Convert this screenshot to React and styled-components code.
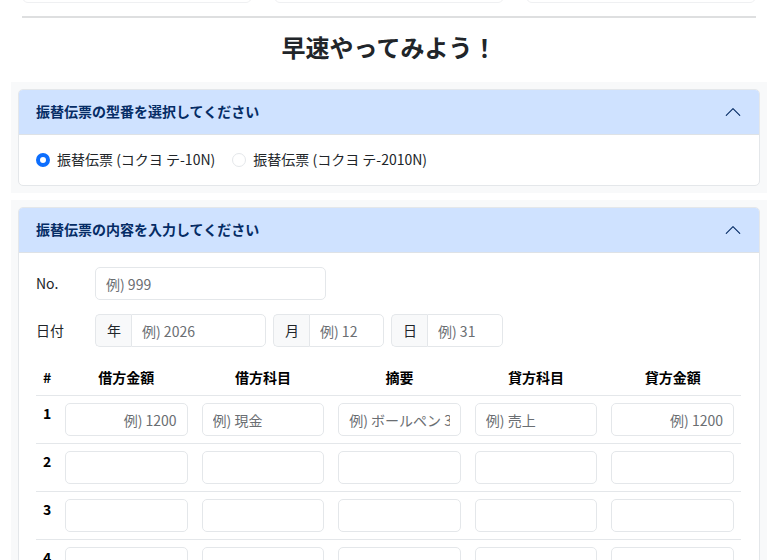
import React, { useState } from "react";
import styled, { createGlobalStyle } from "styled-components";

const models = [
  { id: "te10n", label: "振替伝票 (コクヨ テ-10N)" },
  { id: "te2010n", label: "振替伝票 (コクヨ テ-2010N)" },
];

const dateParts = [
  { id: "year", label: "年", placeholder: "例) 2026" },
  { id: "month", label: "月", placeholder: "例) 12" },
  { id: "day", label: "日", placeholder: "例) 31" },
];

const columns = [
  { id: "debitAmount", label: "借方金額", placeholder: "例) 1200", align: "right" },
  { id: "debitAccount", label: "借方科目", placeholder: "例) 現金" },
  { id: "summary", label: "摘要", placeholder: "例) ボールペン 3本" },
  { id: "creditAccount", label: "貸方科目", placeholder: "例) 売上" },
  { id: "creditAmount", label: "貸方金額", placeholder: "例) 1200", align: "right" },
];

const rows = [1, 2, 3, 4];

const Panel = ({ title, children }) => {
  const [open, setOpen] = useState(true);

  return (
    <Section>
      <Accordion>
        <Heading>
          <Toggle
            type="button"
            aria-expanded={open}
            onClick={() => setOpen(!open)}
          >
            {title}
            <Chevron $open={open} viewBox="0 0 16 16" aria-hidden="true">
              <path d="m2 11 6-6 6 6" />
            </Chevron>
          </Toggle>
        </Heading>
        {open && <Body>{children}</Body>}
      </Accordion>
    </Section>
  );
};

const App = () => {
  const [model, setModel] = useState("te10n");

  return (
    <Page>
      <GlobalStyle />
      <Cards>
        <Card />
        <Card />
        <Card />
      </Cards>
      <Divider />
      <Title>早速やってみよう！</Title>

      <Panel title="振替伝票の型番を選択してください">
        <RadioGroup>
          {models.map(({ id, label }) => (
            <RadioLabel key={id} htmlFor={id}>
              <Radio
                type="radio"
                name="model"
                id={id}
                checked={model === id}
                onChange={() => setModel(id)}
              />
              {label}
            </RadioLabel>
          ))}
        </RadioGroup>
      </Panel>

      <Panel title="振替伝票の内容を入力してください">
        <Fields>
          <Field>
            <label htmlFor="number">No.</label>
            <NumberBox>
              <Input type="text" id="number" placeholder="例) 999" />
            </NumberBox>
          </Field>
          <Field>
            <label htmlFor="year">日付</label>
            <DateBox>
              {dateParts.map(({ id, label, placeholder }) => (
                <InputGroup key={id}>
                  <Addon htmlFor={id}>{label}</Addon>
                  <Input type="text" id={id} placeholder={placeholder} />
                </InputGroup>
              ))}
            </DateBox>
          </Field>
        </Fields>
        <Table>
          <thead>
            <tr>
              <NumberHead scope="col">#</NumberHead>
              {columns.map(({ id, label }) => (
                <th key={id} scope="col">
                  {label}
                </th>
              ))}
            </tr>
          </thead>
          <tbody>
            {rows.map((row) => (
              <tr key={row}>
                <th scope="row">{row}</th>
                {columns.map(({ id, label, placeholder, align }) => (
                  <td key={id}>
                    <Input
                      type="text"
                      aria-label={`${label} ${row}`}
                      placeholder={row === 1 ? placeholder : undefined}
                      $align={align}
                    />
                  </td>
                ))}
              </tr>
            ))}
          </tbody>
        </Table>
      </Panel>
    </Page>
  );
};

export default App;

const GlobalStyle = createGlobalStyle`
  *, *::before, *::after {
    box-sizing: border-box;
  }

  body {
    margin: 0;
    background: #fff;
    color: #212529;
    font-family: "Noto Sans CJK JP", sans-serif;
    font-size: 14px;
    line-height: 21px;
  }

  input, button {
    font: inherit;
  }
`;

const Page = styled.main`
  padding: 0 15px 0 11px;
`;

const Cards = styled.div`
  display: grid;
  grid-template-columns: repeat(3, 1fr);
  align-content: end;
  gap: 22px;
  height: 3px;
  padding: 0 11px;
  overflow: hidden;
`;

const Card = styled.div`
  height: 14px;
  border: 1px solid #eff0f2;
  border-radius: 6px;
`;

const Divider = styled.hr`
  height: 2px;
  margin: 13px 11px 14px;
  border: none;
  background: #dedfe0;
`;

const Title = styled.h2`
  margin: 0 0 20px;
  font-size: 24px;
  font-weight: 700;
  line-height: 30px;
  text-align: center;
`;

const Section = styled.section`
  margin-bottom: 7px;
  padding: 7px;
  background: #f8f9fa;
`;

const Accordion = styled.div`
  overflow: hidden;
  border: 1px solid #e4e7ea;
  border-radius: 5px;
  background: #fff;
`;

const Heading = styled.h2`
  margin: 0;
  font-size: 14px;
`;

const Toggle = styled.button`
  display: flex;
  align-items: center;
  justify-content: space-between;
  width: 100%;
  padding: 11px 17px 12px;
  border: none;
  border-bottom: 1px solid #dee2e6;
  background: #cfe2ff;
  color: #052c65;
  font-weight: 700;
  cursor: pointer;
`;

const Chevron = styled.svg`
  width: 18px;
  height: 18px;
  fill: none;
  stroke: #052c65;
  stroke-linecap: round;
  stroke-linejoin: round;
  transform: ${({ $open }) => ($open ? "none" : "rotate(180deg)")};
`;

const Body = styled.div`
  padding: 14px 18px 15px 17px;
`;

const RadioGroup = styled.div`
  display: flex;
  gap: 17px;
`;

const RadioLabel = styled.label`
  display: flex;
  align-items: center;
  gap: 7px;
`;

const Radio = styled.input`
  appearance: none;
  width: 14px;
  height: 14px;
  margin: 0;
  border: 1px solid #e4e7ea;
  border-radius: 50%;
  background: #fff;

  &:checked {
    border: 4px solid #0d6efd;
  }
`;

const Fields = styled.div`
  display: grid;
  gap: 14px;
  margin-bottom: 13px;
`;

const Field = styled.div`
  display: grid;
  grid-template-columns: 59px 1fr;
  align-items: center;
`;

const NumberBox = styled.div`
  display: grid;
  grid-template-columns: 231fr 415fr;
`;

const DateBox = styled.div`
  display: grid;
  grid-template-columns: 171fr 111fr 112fr 231fr;
  gap: 7px;
`;

const InputGroup = styled.div`
  display: flex;
`;

const Input = styled.input`
  display: block;
  width: 100%;
  min-width: 0;
  height: 33px;
  padding: 5px 10px;
  border: 1px solid #e4e7ea;
  border-radius: 5px;
  outline: none;
  background: #fff;
  color: #212529;
  text-align: ${({ $align }) => $align || "left"};

  &::placeholder {
    color: #6a6e72;
    opacity: 1;
  }

  &:focus {
    border-color: #86b7fe;
  }

  ${InputGroup} & {
    border-radius: 0 5px 5px 0;
  }
`;

const Addon = styled.label`
  display: flex;
  align-items: center;
  padding: 0 10px 0 11px;
  border: 1px solid #e4e7ea;
  border-right: none;
  border-radius: 5px 0 0 5px;
  background: #f8f9fa;
`;

const Table = styled.table`
  width: 100%;
  table-layout: fixed;
  border-collapse: collapse;
  color: #000;

  th,
  td {
    padding: 7px;
    border-bottom: 1px solid #e4e7ea;
    vertical-align: top;
  }

  th {
    font-weight: 700;
    text-align: center;
  }
`;

const NumberHead = styled.th`
  width: 22px;
`;
